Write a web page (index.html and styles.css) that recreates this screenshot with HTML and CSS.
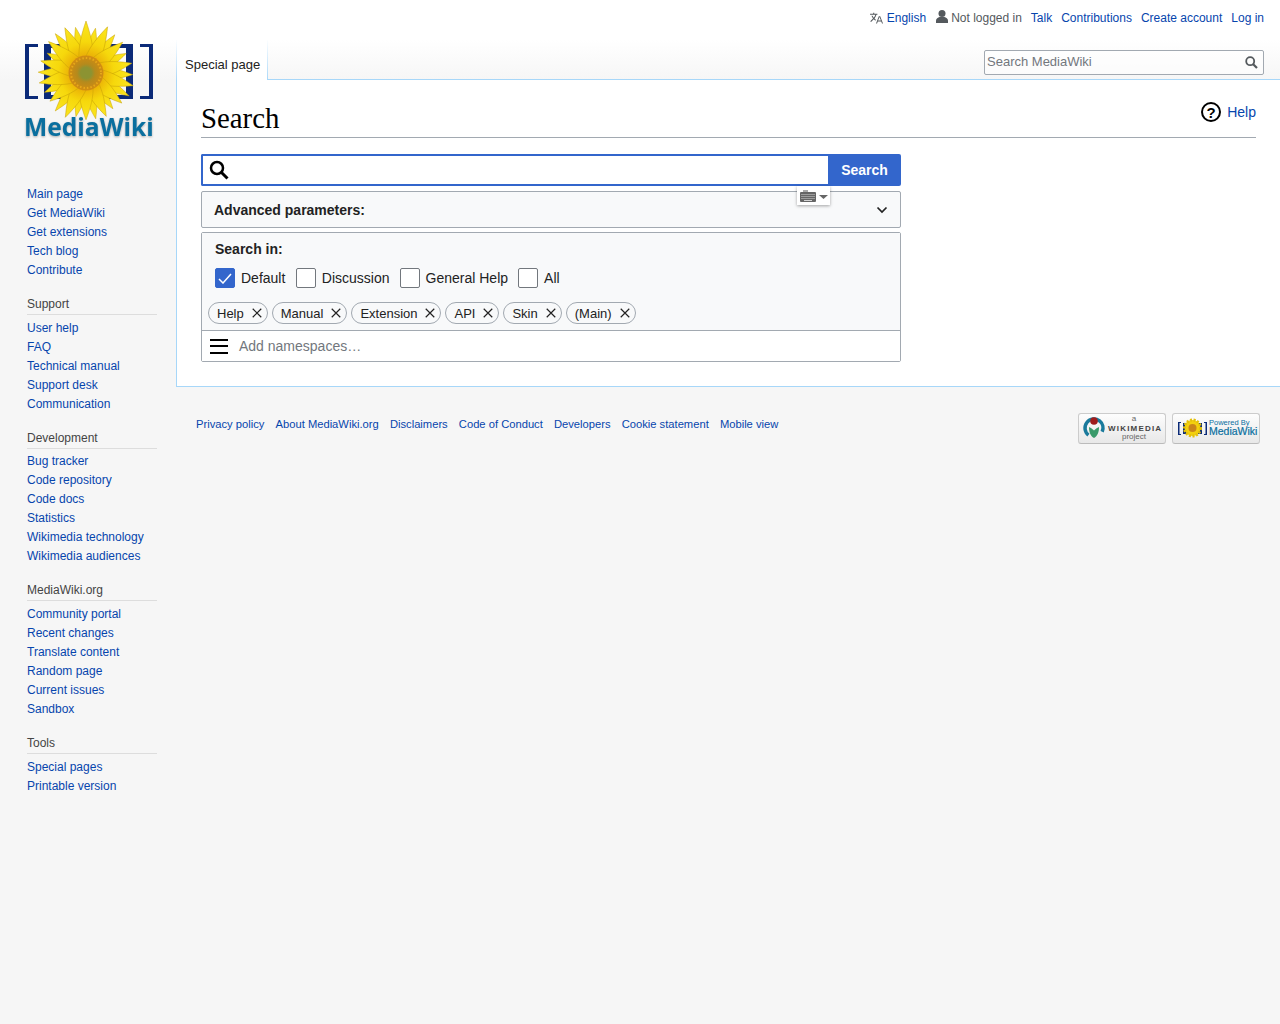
FILE: index.html
```html
<!DOCTYPE html>
<html lang="en">
<head>
<meta charset="utf-8">
<title>Search - MediaWiki</title>
<link rel="stylesheet" href="styles.css">
</head>
<body>
<div class="page">
  <aside class="sidebar">
    <a class="logo" href="#" aria-label="MediaWiki">
      <svg width="160" height="160" viewBox="0 0 160 160">
        <defs>
          <path id="p" d="M-7-12C-8-27-4-40 0-52 4-40 8-27 7-12Z"/>
          <radialGradient id="petal" gradientUnits="userSpaceOnUse" cx="0" cy="0" r="52">
            <stop offset=".3" stop-color="#e9ac06"/>
            <stop offset=".6" stop-color="#f6d80c"/>
            <stop offset="1" stop-color="#fbe620"/>
          </radialGradient>
          <radialGradient id="disc" gradientUnits="userSpaceOnUse" cx="0" cy="0" r="18">
            <stop offset=".3" stop-color="#8c9332"/>
            <stop offset=".5" stop-color="#b58a1c"/>
            <stop offset="1" stop-color="#d58c10"/>
          </radialGradient>
        </defs>
        <g fill="#0b2a78">
          <path d="M25 44h13v3h-9v49h9v3H25Z"/>
          <path d="M153 44h-13v3h9v49h-9v3h13Z"/>
          <path fill-rule="evenodd" d="M44 44h89v55H44ZM51 48v47h75V48Z"/>
        </g>
        <g transform="translate(86 73)" fill="url(#petal)" stroke="#c69f05" stroke-width=".5">
          <use href="#p" transform="rotate(12) scale(.9 .88)"/><use href="#p" transform="rotate(37) scale(.9 .92)"/><use href="#p" transform="rotate(64) scale(.9 .86)"/><use href="#p" transform="rotate(92) scale(.9 .9)"/><use href="#p" transform="rotate(118) scale(.9 .94)"/><use href="#p" transform="rotate(143) scale(.9 .86)"/><use href="#p" transform="rotate(168) scale(.9 .9)"/><use href="#p" transform="rotate(193) scale(.9 .86)"/><use href="#p" transform="rotate(219) scale(.9 .94)"/><use href="#p" transform="rotate(245) scale(.9 .88)"/><use href="#p" transform="rotate(271) scale(.9 .92)"/><use href="#p" transform="rotate(297) scale(.9 .84)"/><use href="#p" transform="rotate(322) scale(.9 .96)"/><use href="#p" transform="rotate(347) scale(.9 .9)"/>
          <use href="#p" transform="rotate(-25) scale(1 .96)"/><use href="#p" transform="rotate(0)"/><use href="#p" transform="rotate(25) scale(1 .98)"/><use href="#p" transform="rotate(50) scale(1 .92)"/><use href="#p" transform="rotate(78) scale(1 .9)"/><use href="#p" transform="rotate(105) scale(1 .94)"/><use href="#p" transform="rotate(130) scale(1 .9)"/><use href="#p" transform="rotate(155) scale(1 .92)"/><use href="#p" transform="rotate(180) scale(1 .9)"/><use href="#p" transform="rotate(205) scale(1 .94)"/><use href="#p" transform="rotate(232) scale(1 .88)"/><use href="#p" transform="rotate(258) scale(1 .92)"/><use href="#p" transform="rotate(285) scale(1 .9)"/><use href="#p" transform="rotate(310) scale(1 .94)"/>
          <circle r="17.500" fill="url(#disc)" stroke="none"/>
          <circle r="15" fill="none" stroke="#e8a81a" stroke-width="2" stroke-dasharray="1.500 2"/>
        </g>
        <text class="logo-text" x="24" y="136">MediaWiki</text>
      </svg>
    </a>
    <nav class="portal first">
      <ul>
        <li><a href="#">Main page</a></li>
        <li><a href="#">Get MediaWiki</a></li>
        <li><a href="#">Get extensions</a></li>
        <li><a href="#">Tech blog</a></li>
        <li><a href="#">Contribute</a></li>
      </ul>
    </nav>
    <nav class="portal">
      <h3>Support</h3>
      <ul>
        <li><a href="#">User help</a></li>
        <li><a href="#">FAQ</a></li>
        <li><a href="#">Technical manual</a></li>
        <li><a href="#">Support desk</a></li>
        <li><a href="#">Communication</a></li>
      </ul>
    </nav>
    <nav class="portal">
      <h3>Development</h3>
      <ul>
        <li><a href="#">Bug tracker</a></li>
        <li><a href="#">Code repository</a></li>
        <li><a href="#">Code docs</a></li>
        <li><a href="#">Statistics</a></li>
        <li><a href="#">Wikimedia technology</a></li>
        <li><a href="#">Wikimedia audiences</a></li>
      </ul>
    </nav>
    <nav class="portal">
      <h3>MediaWiki.org</h3>
      <ul>
        <li><a href="#">Community portal</a></li>
        <li><a href="#">Recent changes</a></li>
        <li><a href="#">Translate content</a></li>
        <li><a href="#">Random page</a></li>
        <li><a href="#">Current issues</a></li>
        <li><a href="#">Sandbox</a></li>
      </ul>
    </nav>
    <nav class="portal">
      <h3>Tools</h3>
      <ul>
        <li><a href="#">Special pages</a></li>
        <li><a href="#">Printable version</a></li>
      </ul>
    </nav>
  </aside>

  <div class="main">
    <header class="head">
      <ul class="personal">
        <li class="lang">
          <svg width="14" height="14" viewBox="0 0 20 20" fill="#54595d"><path d="M20 18h-1.400l-1.100-3h-4.900l-1.100 3H10l4-10.500h2ZM13 13.500h4L15 8.600ZM12 5.500v-1.600H7.500V2.500H6v1.400H1.500v1.600h7.600c-.5 1.500-1.300 2.800-2.300 4-.7-.8-1.300-1.700-1.700-2.600H3.500c.5 1.300 1.300 2.500 2.200 3.700L1.800 14.500l1.100 1.100 3.900-3.900 2.400 2.400.6-1.500-1.900-2c1.200-1.300 2.100-3.100 2.700-5.100Z"/></svg>
          <a href="#">English</a>
        </li>
        <li class="user">
          <svg width="12" height="14" viewBox="0 0 12 14" fill="#54595d"><circle cx="6" cy="3.500" r="3.500"/><path d="M0 13v-2.500C0 8.500 2 7.500 3.500 7h5C10 7.500 12 8.500 12 10.500V13Z"/></svg>
          <span>Not logged in</span>
        </li>
        <li><a href="#">Talk</a></li>
        <li><a href="#">Contributions</a></li>
        <li><a href="#">Create account</a></li>
        <li><a href="#">Log in</a></li>
      </ul>
      <div class="head-row">
        <div class="tab"><span>Special page</span></div>
        <form class="site-search">
          <input class="site-input" type="text" placeholder="Search MediaWiki">
          <svg class="site-icon" width="13" height="13" viewBox="0 0 13 13" fill="none" stroke="#54595d"><circle cx="5.200" cy="5.200" r="4" stroke-width="1.800"/><path d="M8.200 8.200l3.800 3.800" stroke-width="2.200"/></svg>
        </form>
      </div>
    </header>

    <main class="content">
      <div class="title-row">
        <h1>Search</h1>
        <a class="help" href="#">
          <svg width="20" height="20" viewBox="0 0 20 20"><circle cx="10" cy="10" r="9" fill="none" stroke="#000" stroke-width="2"/><text class="help-q" x="10" y="15.500" text-anchor="middle">?</text></svg>
          <span>Help</span>
        </a>
      </div>

      <div class="search-panel">
        <div class="searchbar">
          <div class="search-field">
            <svg width="20" height="20" viewBox="0 0 20 20" fill="none" stroke="#000"><circle cx="8" cy="8" r="6" stroke-width="2.500"/><path d="M12.500 12.500l6 6" stroke-width="3"/></svg>
            <input class="search-input" type="text" aria-label="Search">
          </div>
          <button class="search-btn" type="button">Search</button>
          <div class="kbd">
            <svg width="16" height="12" viewBox="0 0 16 12"><path d="M3 0h5v2H3Z" fill="#aaa"/><rect x="0" y="2" width="16" height="10" rx="1" fill="#666"/><path d="M1.500 4.500h13M1.500 6.500h13M1.500 8.500h13" stroke="#d4d4d4" stroke-width="1" stroke-dasharray="1 1"/><path d="M4 10.500h8" stroke="#d4d4d4"/></svg>
            <svg class="kbd-arrow" width="9" height="4" viewBox="0 0 9 4"><path d="M0 0h9L4.500 4Z" fill="#666"/></svg>
          </div>
        </div>

        <div class="advanced">
          <b>Advanced parameters:</b>
          <svg width="12" height="8" viewBox="0 0 12 8" fill="none" stroke="#222" stroke-width="1.700"><path d="M1.500 1.500 6 6l4.500-4.500"/></svg>
        </div>

        <div class="namespaces">
          <div class="ns-top">
            <b class="ns-title">Search in:</b>
            <div class="checks">
              <label class="check first-check"><span class="box on"><svg width="14" height="11" viewBox="0 0 14 11" fill="none" stroke="#fff" stroke-width="1.500"><path d="M1 6l4 4 8-9"/></svg></span>Default</label>
              <label class="check"><span class="box"></span>Discussion</label>
              <label class="check"><span class="box"></span>General Help</label>
              <label class="check"><span class="box"></span>All</label>
            </div>
            <div class="tags">
              <span class="tag">Help<svg class="x" viewBox="0 0 11 11"><path d="M.8.800l9.400 9.400M10.200.800.800 10.200"/></svg></span>
              <span class="tag">Manual<svg class="x" viewBox="0 0 11 11"><path d="M.8.800l9.400 9.400M10.200.800.800 10.200"/></svg></span>
              <span class="tag">Extension<svg class="x" viewBox="0 0 11 11"><path d="M.8.800l9.400 9.400M10.200.800.800 10.200"/></svg></span>
              <span class="tag">API<svg class="x" viewBox="0 0 11 11"><path d="M.8.800l9.400 9.400M10.200.800.800 10.200"/></svg></span>
              <span class="tag">Skin<svg class="x" viewBox="0 0 11 11"><path d="M.8.800l9.400 9.400M10.200.800.800 10.200"/></svg></span>
              <span class="tag">(Main)<svg class="x" viewBox="0 0 11 11"><path d="M.8.800l9.400 9.400M10.200.800.800 10.200"/></svg></span>
            </div>
          </div>
          <div class="ns-add">
            <svg width="18" height="15" viewBox="0 0 18 15" fill="#000"><rect width="18" height="2"/><rect y="6" width="18" height="2"/><rect y="13" width="18" height="2"/></svg>
            <span>Add namespaces…</span>
          </div>
        </div>
      </div>
    </main>

    <footer class="footer">
      <ul class="foot-links">
        <li><a href="#">Privacy policy</a></li>
        <li><a href="#">About MediaWiki.org</a></li>
        <li><a href="#">Disclaimers</a></li>
        <li><a href="#">Code of Conduct</a></li>
        <li><a href="#">Developers</a></li>
        <li><a href="#">Cookie statement</a></li>
        <li><a href="#">Mobile view</a></li>
      </ul>
      <div class="badges">
        <a class="badge" href="#">
          <svg width="86" height="29" viewBox="0 0 86 29">
            <circle cx="15" cy="14" r="9" fill="none" stroke="#1a7a9c" stroke-width="3.500" stroke-dasharray="40 17" transform="rotate(128 15 14)"/>
            <path d="M15 24c-3.500-2-5-5.500-5-11 2 1 3.500 2 5 3.500 1.500-1.500 3-2.500 5-3.500 0 5.500-1.500 9-5 11Z" fill="#3a9a6a"/>
            <circle cx="15" cy="7" r="3.800" fill="#a01c1c"/>
            <text class="wm-a" x="55" y="7" text-anchor="middle">a</text>
            <text class="wm-name" x="29" y="17">WIKIMEDIA</text>
            <text class="wm-a" x="55" y="25" text-anchor="middle">project</text>
          </svg>
        </a>
        <a class="badge" href="#">
          <svg width="86" height="29" viewBox="0 0 86 29">
            <path d="M5 8h3v1H6.500v11H8v1H5ZM34 8h-3v1h1.500v11H31v1h3Z" fill="#0b2a78"/>
            <rect x="10" y="9" width="19" height="11" fill="#0b2a78"/>
            <circle cx="19.500" cy="14" r="8" fill="#f3d00e" stroke="#e4c00a" stroke-width="3" stroke-dasharray="2 1.500"/>
            <circle cx="19.500" cy="14" r="4" fill="#c9851a"/>
            <text class="pw-top" x="36" y="11">Powered By</text>
            <text class="pw-name" x="36" y="21">MediaWiki</text>
          </svg>
        </a>
      </div>
    </footer>
  </div>
</div>
</body>
</html>
```

FILE: styles.css
```css
* { box-sizing: border-box; }
html, body { margin: 0; padding: 0; }
body {
  min-height: 1024px;
  background: #f6f6f6 linear-gradient(#fff 50%, #f6f6f6 100%) no-repeat 0 0 / 100% 80px;
  font-family: "Liberation Sans", Arial, sans-serif;
  color: #222;
}
a { color: #0645ad; text-decoration: none; }
ul { list-style: none; margin: 0; padding: 0; }

.page { display: grid; grid-template-columns: 176px 1fr; }

/* sidebar */
.sidebar { padding-bottom: 20px; }
.logo { display: block; height: 160px; }
.logo svg { display: block; }
.logo-text {
  font: bold 24.600px "Open Sans", "Liberation Sans", sans-serif;
  fill: #0a6f9f;
  filter: drop-shadow(0 1px 1px rgba(0,0,0,.3));
}
.portal { padding-left: 27px; width: 157px; margin-bottom: 16.970px; font-size: 12px; }
.portal.first { padding-top: 24.500px; margin-bottom: 17.500px; }
.portal h3 {
  margin: 0 0 3.700px;
  padding: 0 0 2px;
  font-weight: normal;
  font-size: 12px;
  line-height: 15px;
  color: #444;
  border-bottom: 1px solid #ddd;
}
.portal li { line-height: 19px; height: 19px; }

/* header */
.head { height: 79px; display: flex; flex-direction: column; }
.personal {
  display: flex;
  justify-content: flex-end;
  align-items: center;
  gap: 9px;
  height: 36px;
  padding-right: 16px;
  font-size: 12px;
  color: #54595d;
}
.personal li { display: flex; align-items: center; gap: 4px; }
.personal .lang { margin-right: 1px; }
.personal .user { gap: 3px; }
.personal .user svg { margin-top: -3px; }
.head-row { flex: 1; display: flex; justify-content: space-between; align-items: flex-end; }
.tab {
  height: 40px;
  padding: 17px 7px 0 8px;
  background: #fff;
  border-style: solid;
  border-width: 0 1px;
  border-image: linear-gradient(rgba(167,215,249,0), #a7d7f9) 1;
  font-size: 13px;
  color: #222;
  line-height: 16px;
  position: relative;
  top: 1px;
}
.site-search { position: relative; margin: 0 16px 4px 0; width: 280px; height: 25px; }
.site-input {
  width: 100%;
  height: 25px;
  padding: 0 24px 2px 2px;
  border: 1px solid #a2a9b1;
  border-radius: 2px;
  background: rgba(255,255,255,.5);
  font: 13px "Liberation Sans", Arial, sans-serif;
}
.site-input::placeholder { color: #72777d; opacity: 1; }
.site-icon { position: absolute; right: 6px; top: 6px; }

/* content */
.content {
  background: #fff;
  border: 1px solid #a7d7f9;
  border-right: 0;
  padding: 20px 24px 24px;
  height: 308px;
  font-size: 14px;
}
.title-row { position: relative; border-bottom: 1px solid #a2a9b1; height: 38px; }
h1 {
  margin: 0;
  font: normal 28.800px/37px "Liberation Serif", "Times New Roman", serif;
  color: #000;
}
.help {
  position: absolute;
  right: 0;
  top: 2px;
  display: flex;
  align-items: center;
  gap: 6px;
}
.help svg { display: block; }
.help-q { font: bold 15px "Liberation Sans", Arial, sans-serif; fill: #000; }

.search-panel { width: 700px; margin-top: 16px; }
.searchbar { display: flex; height: 32px; position: relative; }
.search-field {
  flex: 1;
  display: flex;
  align-items: center;
  gap: 4px;
  padding-left: 6px;
  min-width: 0;
  border: 2px solid #36c;
  border-right: 0;
  border-radius: 2px 0 0 2px;
  background: #fff;
}
.search-input { flex: 1; min-width: 0; border: 0; outline: 0; background: none; font: 14px "Liberation Sans", Arial, sans-serif; }
.search-btn {
  flex: 0 0 73px;
  padding: 0;
  border: 0;
  border-radius: 0 2px 2px 0;
  background: #36c;
  color: #fff;
  font: bold 14px "Liberation Sans", Arial, sans-serif;
}
.kbd {
  position: absolute;
  right: 71px;
  top: 32px;
  width: 33px;
  height: 19px;
  display: flex;
  align-items: center;
  gap: 3px;
  padding-left: 3px;
  background: #fff;
  box-shadow: 0 1px 3px rgba(0,0,0,.35);
  z-index: 1;
}
.kbd-arrow { margin-top: 3px; }
.advanced {
  margin-top: 5px;
  height: 37px;
  display: flex;
  justify-content: space-between;
  align-items: center;
  padding: 0 12px;
  background: #f8f9fa;
  border: 1px solid #a2a9b1;
  border-radius: 2px;
}
.namespaces {
  margin-top: 4px;
  border: 1px solid #a2a9b1;
  border-radius: 2px;
}
.ns-top { background: #f8f9fa; height: 97px; padding: 8px 6px 0; }
.ns-title { display: block; padding-left: 7px; line-height: 16px; }
.checks { display: flex; gap: 10px; margin-top: 11px; padding-left: 7px; }
.check { display: flex; align-items: center; gap: 6px; height: 20px; }
.first-check { margin-right: .5px; }
.box {
  width: 20px;
  height: 20px;
  border: 1px solid #72777d;
  border-radius: 2px;
  background: #fff;
  display: flex;
  align-items: center;
  justify-content: center;
}
.box.on { background: #36c; border-color: #36c; }
.tags { display: flex; gap: 4px; margin-top: 14px; }
.tag {
  height: 22px;
  display: flex;
  align-items: center;
  justify-content: space-between;
  padding: 0 5px 0 8px;
  gap: 8px;
  border: 1px solid #a2a9b1;
  border-radius: 11px;
  font-size: 13px;
  background: #f8f9fa;
}
.x { width: 10px; height: 10px; fill: none; stroke: #222; stroke-width: 1.300; }
.ns-add {
  height: 31px;
  display: flex;
  align-items: center;
  gap: 11px;
  padding-left: 8px;
  background: #fff;
  border-top: 1px solid #a2a9b1;
  color: #72777d;
}

/* footer */
.footer {
  display: flex;
  justify-content: space-between;
  padding: 26px 20px 0;
  font-size: 11.200px;
}
.foot-links { display: flex; gap: 11.150px; padding-top: 4px; line-height: 14px; }
.badges { display: flex; gap: 6px; }
.badge {
  display: block;
  width: 88px;
  height: 31px;
  border: 1px solid #ccc;
  border-bottom-color: #bbb;
  border-radius: 3px;
  background: linear-gradient(#fdfdfd, #e8e8e8);
}
.badge svg { display: block; }
.wm-a { font: 8px "Liberation Sans", Arial, sans-serif; fill: #666; }
.wm-name { font: bold 8px "Liberation Sans", Arial, sans-serif; letter-spacing: 1.200px; fill: #444; }
.pw-top { font: 7.500px "Liberation Sans", Arial, sans-serif; fill: #0a6f9f; }
.pw-name { font: 10.500px "Liberation Sans", Arial, sans-serif; fill: #0a6f9f; stroke: #0a6f9f; stroke-width: .2; }
```
